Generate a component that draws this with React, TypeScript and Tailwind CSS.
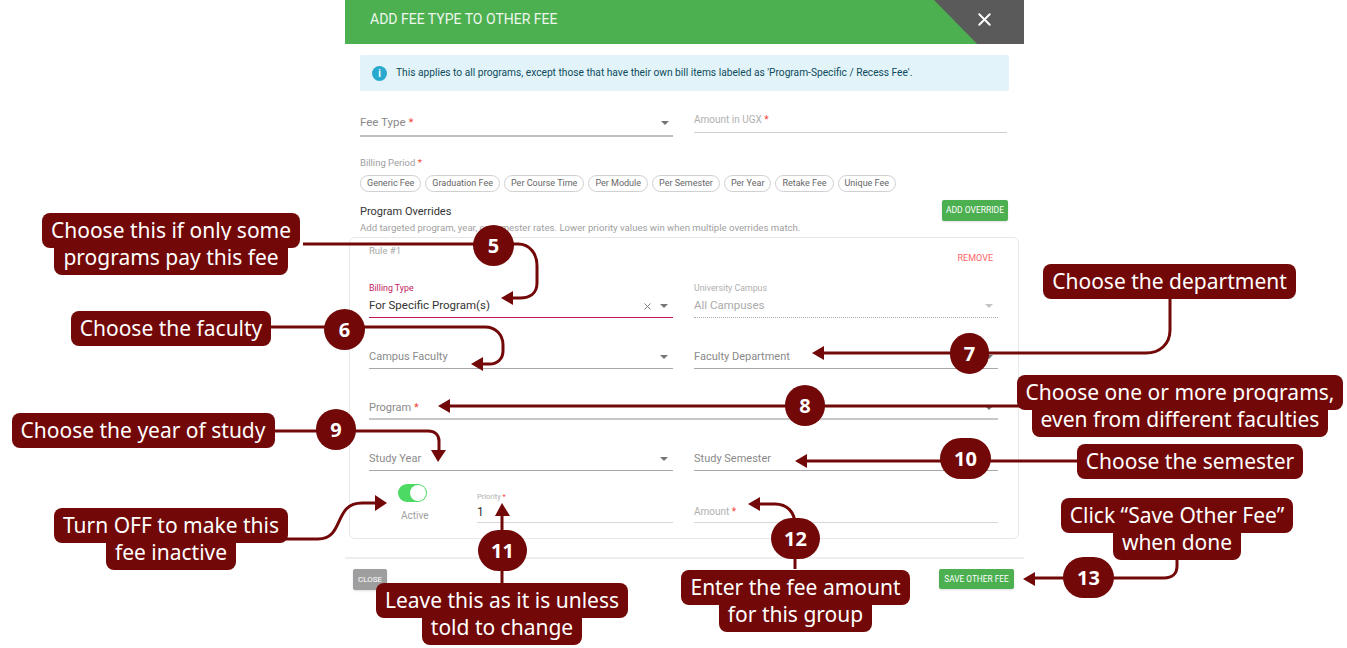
import { X, ChevronDown } from 'lucide-react'

const chips = ['Generic Fee', 'Graduation Fee', 'Per Course Time', 'Per Module', 'Per Semester', 'Per Year', 'Retake Fee', 'Unique Fee']

function Star() {
  return <span className="text-[#f44336]"> *</span>
}

function Caret({ light }: { light?: boolean }) {
  return <span className={`w-0 h-0 border-x-[4px] border-x-transparent border-t-[4px] ${light ? 'border-t-[#c4c4c4]' : 'border-t-[#757575]'}`} />
}

function Field({ label, value, small, required, caret = true, line = 'border-[#a8a8a8]' }: { label?: string; value?: string; small?: string; required?: boolean; caret?: boolean; line?: string }) {
  return (
    <div className={`h-full flex flex-col justify-end border-b ${line}`}>
      {small && <div className="text-[9px] leading-[12px] text-[#a0a0a0]">{small}</div>}
      <div className="flex items-center justify-between h-[14px] mb-[4px] mt-[5px] pr-[5px]">
        {value ? (
          <span className="text-[11.5px] text-[#333]">{value}</span>
        ) : (
          <span className="text-[11px] text-[#8a8a8a]">{label}{required && <Star />}</span>
        )}
        {caret && <Caret />}
      </div>
    </div>
  )
}

function Dialog() {
  return (
    <div className="ml-[345px] w-[679px] bg-white font-['Roboto',sans-serif]">
      <header className="relative h-[44px] bg-[#4caf50] flex items-center pl-[25px] overflow-hidden">
        <h1 className="text-[14px] text-white/90 pb-[6px]">ADD FEE TYPE TO OTHER FEE</h1>
        <div className="absolute right-0 top-0 w-[90px] h-[44px] bg-[#5a5a5a] [clip-path:polygon(0_0,100%_0,100%_100%,48%_100%)] flex items-start justify-end">
          <X className="mr-[29px] mt-[9px] text-white" size={21} strokeWidth={2.2} />
        </div>
      </header>

      <div className="px-[15px]">
        <div className="mt-[11px] h-[36px] rounded-[2px] bg-[#e2f4f9] flex items-center pl-[12px] gap-[9px] text-[10.2px] text-[#0e4a5c]">
          <span className="w-[15px] h-[15px] rounded-full bg-[#29a9ce] text-white text-[10px] font-bold flex items-center justify-center">i</span>
          This applies to all programs, except those that have their own bill items labeled as 'Program-Specific / Recess Fee'.
        </div>

        <div className="mt-[20px] grid grid-cols-[313px_313px] gap-x-[21px] items-start">
          <div className="h-[26px] border-b-2 border-[#bdbdbd] flex items-center justify-between pr-[4px]">
            <span className="text-[11.5px] text-[#8a8a8a]">Fee Type<Star /></span>
            <Caret />
          </div>
          <div className="h-[22px] border-b border-[#cfcfcf] text-[10px] text-[#b0b0b0] pt-[1px]">Amount in UGX<Star /></div>
        </div>

        <div className="mt-[20px] text-[9.5px] leading-[12px] text-[#a0a0a0]">Billing Period<Star /></div>
        <div className="mt-[6px] flex gap-[4px]">
          {chips.map((c) => (
            <span key={c} className="h-[17px] px-[6px] rounded-full border border-[#d0d0d0] text-[9px] leading-[15px] text-[#666]">{c}</span>
          ))}
        </div>

        <div className="mt-[8px] h-[22px] flex justify-between">
          <div>
            <div className="text-[11px] leading-[14px] text-[#333] mt-[-2px] pt-[7px]">Program Overrides</div>
            <div className="text-[9.6px] leading-[12px] text-[#a0a0a0] mt-[3px]">Add targeted program, year, or semester rates. Lower priority values win when multiple overrides match.</div>
          </div>
          <button className="w-[66px] h-[21px] mr-[1px] rounded-[2px] bg-[#4caf50] text-white text-[8.5px] shadow-sm">ADD OVERRIDE</button>
        </div>
      </div>

      <div className="mt-[15px] mx-[4px] w-[670px] h-[302px] rounded-[6px] border border-[#e8e8e8] px-[19px]">
        <div className="h-[29px] flex justify-between">
          <span className="text-[9.5px] text-[#a8a8a8] mt-[6px]">Rule #1</span>
          <span className="text-[9px] text-[#f66] mt-[14px] mr-[6px]">REMOVE</span>
        </div>
        <div className="grid grid-cols-[304px_304px] gap-x-[21px] auto-rows-[51px]">
          <div className="h-full flex flex-col justify-end border-b border-[#c2185b]">
            <div className="text-[8.8px] leading-[12px] text-[#c2185b]">Billing Type</div>
            <div className="flex items-center justify-between h-[14px] mb-[4px] mt-[5px] pr-[5px]">
              <span className="text-[11.5px] text-[#333]">For Specific Program(s)</span>
              <span className="flex items-center gap-[7px]"><X size={11} className="text-[#757575]" /><Caret /></span>
            </div>
          </div>
          <div className="h-full flex flex-col justify-end border-b border-dotted border-[#aaa]">
            <div className="text-[8.8px] leading-[12px] text-[#b0b0b0]">University Campus</div>
            <div className="flex items-center justify-between h-[14px] mb-[4px] mt-[5px] pr-[5px]">
              <span className="text-[11.5px] text-[#aaa]">All Campuses</span>
              <Caret light />
            </div>
          </div>
          <Field label="Campus Faculty" />
          <Field label="Faculty Department" />
          <div className="col-span-2 flex flex-col justify-end border-b-2 border-[#c8c8c8]">
            <div className="flex items-center justify-between h-[14px] mb-[3px] pr-[5px]">
              <span className="text-[11px] text-[#8a8a8a]">Program<Star /></span>
              <Caret />
            </div>
          </div>
          <Field label="Study Year" />
          <Field label="Study Semester" caret={false} />
        </div>
        <div className="grid grid-cols-[108px_196px_304px] gap-x-[0px] h-[49px] [&>*:last-child]:ml-[21px]">
          <div className="pl-[29px] pt-[13px] flex flex-col items-start">
            <span className="w-[29px] h-[18px] rounded-full bg-[#4cd964] flex items-center justify-end pr-[1px]">
              <span className="w-[16px] h-[16px] rounded-full bg-white" />
            </span>
            <span className="mt-[6px] ml-[3px] text-[10px] text-[#a0a0a0]">Active</span>
          </div>
          <div className="border-b border-[#d8d8d8] flex flex-col justify-end">
            <div className="text-[7.5px] leading-[10px] text-[#b0b0b0]">Priority<Star /></div>
            <div className="text-[12px] leading-[14px] text-[#333] mt-[3px] mb-[3px]">1</div>
          </div>
          <div className="w-[304px] border-b border-[#d8d8d8] flex flex-col justify-end">
            <div className="text-[10px] leading-[14px] text-[#b0b0b0] mb-[3px]">Amount<Star /></div>
          </div>
        </div>
      </div>

      <footer className="mt-[18px] border-t-2 border-[#eeeeee] h-[40px] flex justify-between items-start pl-[8px] pr-[10px] pt-[10px]">
        <button className="w-[34px] h-[21px] rounded-[2px] bg-[#9e9e9e] text-white text-[8px] shadow-sm">CLOSE</button>
        <button className="w-[75px] h-[20px] rounded-[2px] bg-[#4caf50] text-white text-[8.3px] shadow-sm">SAVE OTHER FEE</button>
      </footer>
    </div>
  )
}

function Callout({ lines, className }: { lines: string[]; className: string }) {
  return (
    <div className={`absolute flex flex-col items-center font-['Noto_Sans',sans-serif] text-[21px] text-white ${className}`}>
      {lines.map((l, i) => (
        <span key={l} className={`h-[35px] leading-[35px] px-[9px] rounded-[8px] bg-[#720808] whitespace-nowrap ${i > 0 ? 'mt-[-8px]' : ''}`}>{l}</span>
      ))}
    </div>
  )
}

function Num({ n, className }: { n: number; className: string }) {
  return (
    <div className={`absolute h-[41px] rounded-full bg-[#720808] text-white font-['Noto_Sans',sans-serif] font-bold text-[20px] flex items-center justify-center ${className}`}>{n}</div>
  )
}

function Connectors() {
  return (
    <svg className="absolute inset-0" width="1347" height="648" fill="none" stroke="#720808" strokeWidth="3">
      <path d="M303 244H518C530 244 537 254 537 266V283C537 293 530 298 520 298H510" />
      <polygon fill="#720808" stroke="none" points="501,298 513,291 513,305" />
      <path d="M269 327H485C496 327 503 335 503 345V351C503 359 497 364 490 364H480" />
      <polygon fill="#720808" stroke="none" points="471,364 483,357 483,371" />
      <path d="M1170 298V330C1170 344 1160 353 1146 353H820" />
      <polygon fill="#720808" stroke="none" points="812,353 824,346 824,360" />
      <path d="M1027 406H448" />
      <polygon fill="#720808" stroke="none" points="438,406 450,399 450,413" />
      <path d="M273 431H428C435 431 439 435 439 441V452" />
      <polygon fill="#720808" stroke="none" points="438,462 431,450 446,450" />
      <path d="M1082 461H805" />
      <polygon fill="#720808" stroke="none" points="795,461 807,454 807,468" />
      <path d="M502 583V512" />
      <polygon fill="#720808" stroke="none" points="502,503 495,516 510,516" />
      <path d="M795 569V525C795 512 787 504 775 504H757" />
      <polygon fill="#720808" stroke="none" points="748,504 760,497 760,511" />
      <path d="M1177 560V566C1177 574 1172 578 1164 578H1033" />
      <polygon fill="#720808" stroke="none" points="1023,579 1035,572 1035,586" />
      <path d="M286 539H318C345 539 333 503 362 503H378" />
      <polygon fill="#720808" stroke="none" points="387,503 375,495 375,511" />
    </svg>
  )
}

export default function App() {
  return (
    <div className="relative w-[1347px] h-[648px] overflow-hidden bg-white">
      <Dialog />
      <Connectors />
      <Num n={5} className="left-[473px] top-[225px] w-[41px]" />
      <Num n={6} className="left-[324px] top-[309px] w-[41px]" />
      <Num n={7} className="left-[950px] top-[333px] w-[39px]" />
      <Num n={8} className="left-[785px] top-[385px] w-[40px]" />
      <Num n={9} className="left-[316px] top-[409px] w-[40px]" />
      <Num n={10} className="left-[940px] top-[438px] w-[51px]" />
      <Num n={11} className="left-[478px] top-[530px] w-[49px]" />
      <Num n={12} className="left-[771px] top-[518px] w-[49px]" />
      <Num n={13} className="left-[1063px] top-[557px] w-[51px]" />
      <Callout lines={['Choose this if only some', 'programs pay this fee']} className="left-[47px] top-[213px] w-[248px]" />
      <Callout lines={['Choose the faculty']} className="left-[74px] top-[311px] w-[194px]" />
      <Callout lines={['Choose the year of study']} className="left-[17px] top-[413px] w-[252px]" />
      <Callout lines={['Turn OFF to make this', 'fee inactive']} className="left-[61px] top-[508px] w-[220px]" />
      <Callout lines={['Choose the department']} className="left-[1049px] top-[264px] w-[241px]" />
      <Callout lines={['Choose one or more programs,', 'even from different faculties']} className="left-[1027px] top-[375px] w-[306px]" />
      <Callout lines={['Choose the semester']} className="left-[1082px] top-[444px] w-[216px]" />
      <Callout lines={['Leave this as it is unless', 'told to change']} className="left-[382px] top-[583px] w-[240px]" />
      <Callout lines={['Enter the fee amount', 'for this group']} className="left-[688px] top-[570px] w-[215px]" />
      <Callout lines={['Click “Save Other Fee”', 'when done']} className="left-[1063px] top-[498px] w-[228px]" />
    </div>
  )
}
